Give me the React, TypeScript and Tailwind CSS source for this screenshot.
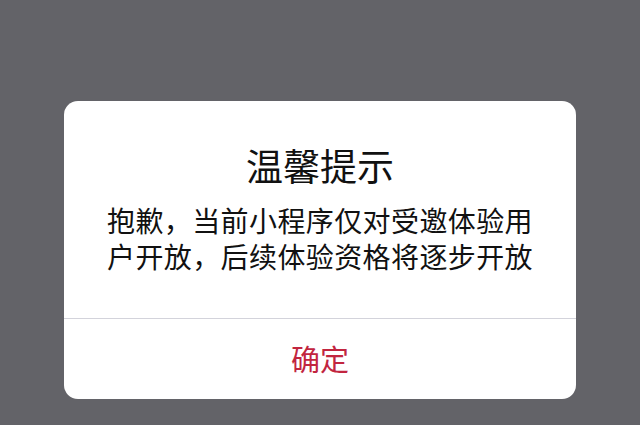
export default function App() {
  return (
    <div
      className="w-[640px] h-[425px] bg-[#636368] flex items-start justify-center pt-[101px]"
      style={{ fontFamily: '"Noto Sans CJK SC", "Noto Sans", sans-serif' }}
    >
      <div className="w-[512px] h-[298px] bg-white rounded-[14px] flex flex-col overflow-hidden">
        <div className="flex flex-col items-center pt-[41px] pb-[44px]">
          <div className="text-[37px] leading-[46px] text-[#111]">温馨提示</div>
          <div className="mt-[14px] flex flex-col items-center text-[28px] leading-[36px] tracking-[0.4px] text-[#111]">
            <div>抱歉，当前小程序仅对受邀体验用</div>
            <div>户开放，后续体验资格将逐步开放</div>
          </div>
        </div>
        <div className="h-px bg-[#d3d3db]" />
        <div className="flex-1 flex items-center justify-center text-[29px] text-[#c2253f]">确定</div>
      </div>
    </div>
  );
}
